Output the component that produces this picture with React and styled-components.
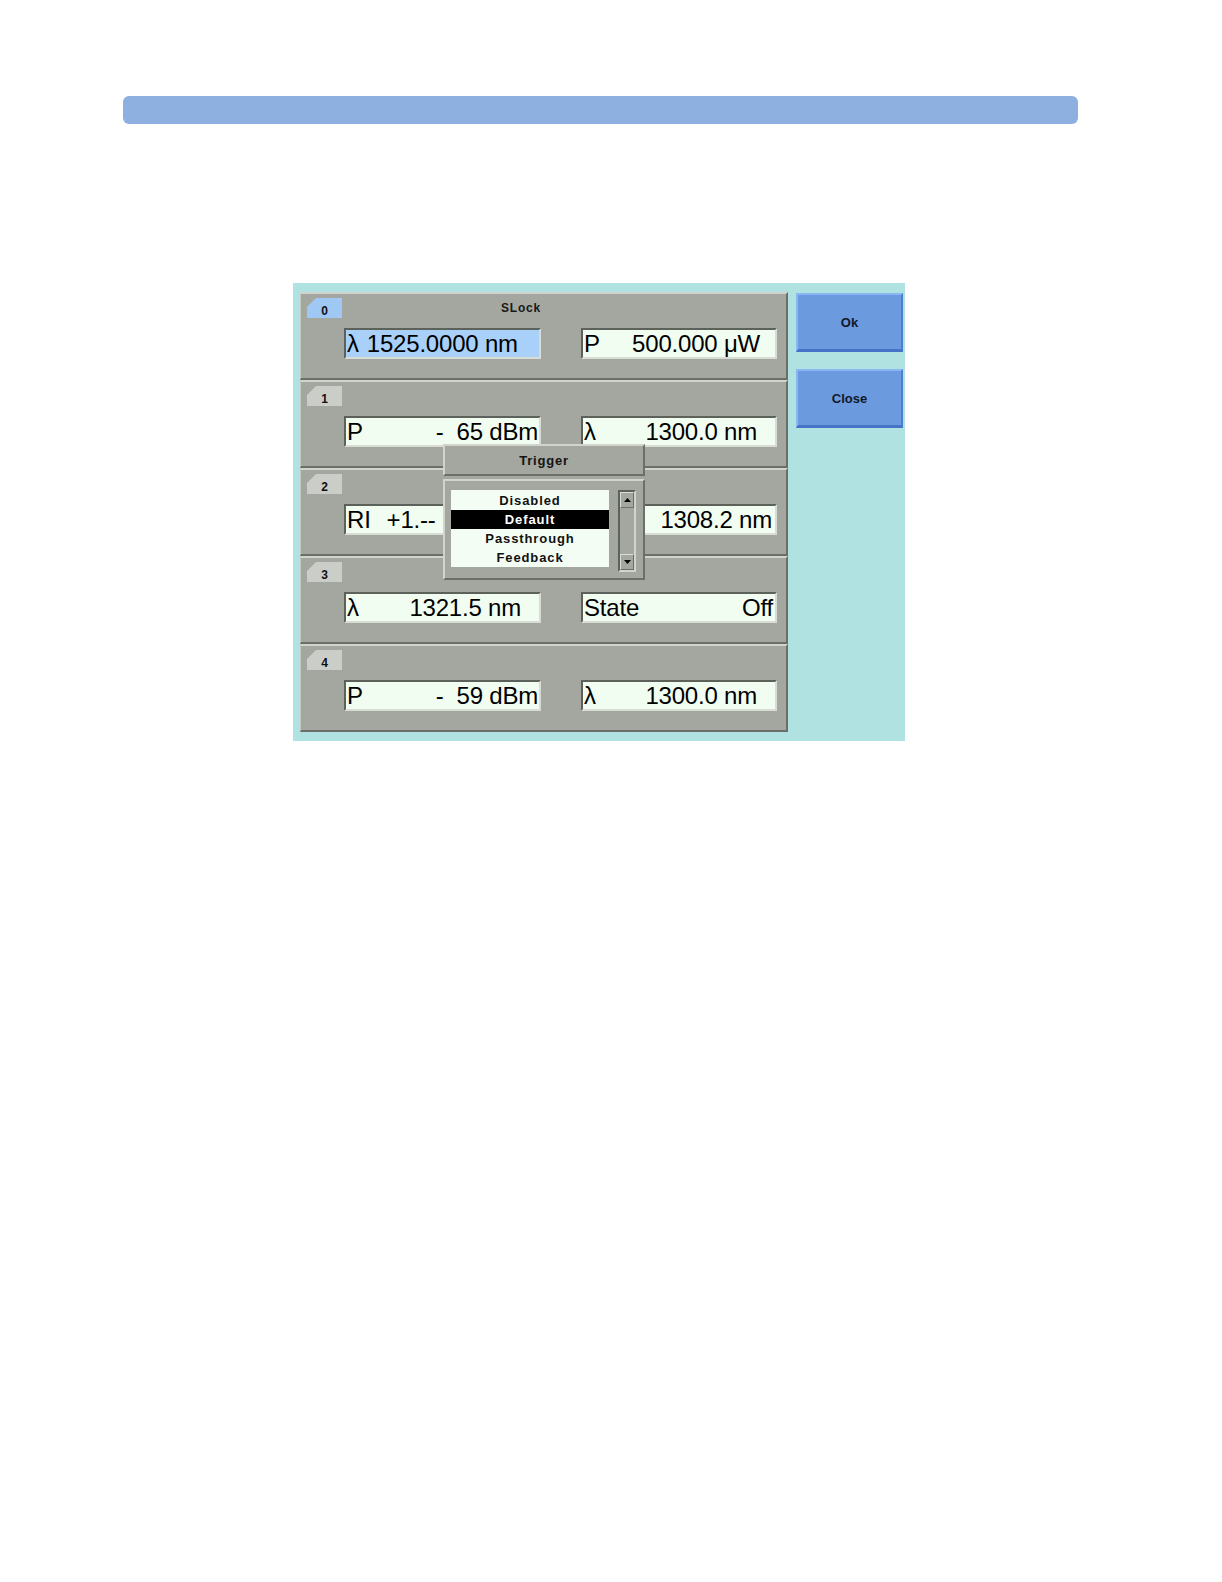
import React from "react";
import styled, { createGlobalStyle } from "styled-components";

const Global = createGlobalStyle`
  html, body { margin: 0; padding: 0; background: #ffffff; overflow: hidden; }
  body { font-family: "Liberation Sans", Arial, sans-serif; }
`;

const Page = styled.div`
  width: 100%;
  height: 1582px;
  padding-top: 96px;
  box-sizing: border-box;
  overflow: hidden;
`;

const TopBar = styled.div`
  margin-left: 123px;
  width: 955px;
  height: 28px;
  border-radius: 6px;
  background: #8db0e0;
`;

const Screen = styled.div`
  margin-top: 159px;
  margin-left: 293px;
  width: 612px;
  height: 458px;
  box-sizing: border-box;
  padding: 9px 0 0 7px;
  background: #b0e2e2;
  display: flex;
  gap: 8px;
  align-items: flex-start;
`;

const Panel = styled.div`
  position: relative;
  width: 488px;
  display: flex;
  flex-direction: column;
  background: #a4a7a0;
`;

const Row = styled.div`
  height: 88px;
  box-sizing: border-box;
  border-top: 2px solid #cfd3cb;
  border-bottom: 2px solid #6b6f69;
  border-left: 1px solid #c4c8c0;
  border-right: 2px solid #6b6f69;
  padding: 4px 0 0 6px;
  display: flex;
  flex-direction: column;
`;

const Header = styled.div`
  width: 234px;
  height: 20px;
  display: flex;
  align-items: center;
  justify-content: space-between;
`;

const Tab = styled.div`
  width: 35px;
  height: 20px;
  background: ${(p) => (p.$active ? "#a0c8f4" : "#cbcec8")};
  clip-path: polygon(9px 0, 100% 0, 100% 100%, 0 100%, 0 9px);
  font-size: 12px;
  font-weight: bold;
  color: #101010;
  display: flex;
  align-items: center;
  justify-content: center;
  padding-top: 6px;
  box-sizing: border-box;
`;

const Title = styled.div`
  font-size: 12px;
  font-weight: bold;
  letter-spacing: 0.8px;
  color: #181818;
  align-self: flex-start;
  margin-top: 3px;
`;

const Fields = styled.div`
  margin-top: 10px;
  margin-left: 37px;
  display: flex;
  gap: 40px;
`;

const Field = styled.div`
  width: ${(p) => p.$w}px;
  height: 31px;
  box-sizing: border-box;
  border-top: 2px solid #5c615a;
  border-left: 2px solid #5c615a;
  border-bottom: 2px solid #d8dcd4;
  border-right: 2px solid #d8dcd4;
  background: ${(p) => (p.$selected ? "#a8d0f8" : "#f2fdf2")};
  display: flex;
  align-items: center;
  padding-left: 1px;
  font-size: 24px;
  color: #000;
  white-space: pre;
  letter-spacing: -0.2px;
  overflow: hidden;
`;

const Label = styled.span`
  flex: none;
`;

const Value = styled.span`
  margin-left: ${(p) => (p.$left != null ? `${p.$left}px` : "auto")};
  padding-right: ${(p) => p.$pr || 0}px;
`;

const Side = styled.div`
  display: flex;
  flex-direction: column;
  gap: 17px;
  padding-top: 1px;
`;

const Button = styled.div`
  width: 107px;
  height: 59px;
  box-sizing: border-box;
  background: #6b9ade;
  border-top: 2px solid #8ab6f2;
  border-left: 2px solid #8ab6f2;
  border-bottom: 3px solid #4574c6;
  border-right: 2px solid #4f7ecc;
  display: flex;
  align-items: center;
  justify-content: center;
  font-size: 13px;
  font-weight: bold;
  color: #10182a;
`;

const Popup = styled.div`
  position: absolute;
  left: 143px;
  top: 152px;
  width: 202px;
  display: flex;
  flex-direction: column;
  gap: 3px;
`;

const PopHeader = styled.div`
  height: 32px;
  box-sizing: border-box;
  background: #a4a7a0;
  border-top: 2px solid #d0d4cc;
  border-left: 2px solid #d0d4cc;
  border-bottom: 2px solid #6b6f69;
  border-right: 2px solid #6b6f69;
  display: flex;
  align-items: center;
  justify-content: center;
  font-size: 13px;
  font-weight: bold;
  letter-spacing: 0.8px;
  color: #141414;
`;

const PopBody = styled.div`
  height: 101px;
  box-sizing: border-box;
  background: #a4a7a0;
  border-top: 2px solid #d0d4cc;
  border-left: 2px solid #d0d4cc;
  border-bottom: 2px solid #6b6f69;
  border-right: 2px solid #6b6f69;
  padding: 9px 0 0 6px;
  display: flex;
  gap: 9px;
  align-items: flex-start;
`;

const List = styled.div`
  width: 158px;
  height: 77px;
  background: #f4fdf4;
  display: flex;
  flex-direction: column;
  padding-top: 1px;
  box-sizing: border-box;
`;

const Item = styled.div`
  height: 19px;
  display: flex;
  align-items: center;
  justify-content: center;
  font-size: 13px;
  font-weight: bold;
  letter-spacing: 0.9px;
  background: ${(p) => (p.$sel ? "#000" : "transparent")};
  color: ${(p) => (p.$sel ? "#fff" : "#111")};
`;

const Scroll = styled.div`
  width: 18px;
  height: 82px;
  box-sizing: border-box;
  border-top: 2px solid #5c615a;
  border-left: 2px solid #5c615a;
  border-bottom: 2px solid #d0d4cc;
  border-right: 2px solid #d0d4cc;
  background: #a4a7a0;
  display: flex;
  flex-direction: column;
  justify-content: space-between;
`;

const ScrollBtn = styled.div`
  height: 16px;
  box-sizing: border-box;
  border-top: 1px solid #d8dcd4;
  border-left: 1px solid #d8dcd4;
  border-bottom: 1px solid #6b6f69;
  border-right: 1px solid #6b6f69;
  display: flex;
  align-items: center;
  justify-content: center;
`;

const Arrow = ({ down }) => (
  <svg width="7" height="4" viewBox="0 0 7 4">
    <polygon points={down ? "0,0 7,0 3.5,4" : "3.5,0 7,4 0,4"} fill="#000" />
  </svg>
);

const rows = [
  {
    tab: "0",
    active: true,
    title: "SLock",
    fields: [
      { label: "λ", value: "1525.0000 nm", left: 8, selected: true },
      { label: "P", value: "500.000 μW", pr: 15 },
    ],
  },
  {
    tab: "1",
    fields: [
      { label: "P", value: "-  65 dBm", pr: 1 },
      { label: "λ", value: "1300.0 nm", pr: 18 },
    ],
  },
  {
    tab: "2",
    fields: [
      { label: "RI", value: "+1.--", left: 16 },
      { label: "λ", value: "1308.2 nm", pr: 3 },
    ],
  },
  {
    tab: "3",
    fields: [
      { label: "λ", value: "1321.5 nm", pr: 18 },
      { label: "State", value: "Off", pr: 2 },
    ],
  },
  {
    tab: "4",
    fields: [
      { label: "P", value: "-  59 dBm", pr: 1 },
      { label: "λ", value: "1300.0 nm", pr: 18 },
    ],
  },
];

export default function App() {
  return (
    <Page>
      <Global />
      <TopBar />
      <Screen>
        <Panel>
          {rows.map((r) => (
            <Row key={r.tab}>
              <Header>
                <Tab $active={r.active}>{r.tab}</Tab>
                {r.title && <Title>{r.title}</Title>}
              </Header>
              <Fields>
                {r.fields.map((f, i) => (
                  <Field key={i} $w={i === 0 ? 197 : 196} $selected={f.selected}>
                    <Label>{f.label}</Label>
                    <Value $left={f.left} $pr={f.pr}>
                      {f.value}
                    </Value>
                  </Field>
                ))}
              </Fields>
            </Row>
          ))}
          <Popup>
            <PopHeader>Trigger</PopHeader>
            <PopBody>
              <List>
                <Item>Disabled</Item>
                <Item $sel>Default</Item>
                <Item>Passthrough</Item>
                <Item>Feedback</Item>
              </List>
              <Scroll>
                <ScrollBtn>
                  <Arrow />
                </ScrollBtn>
                <ScrollBtn>
                  <Arrow down />
                </ScrollBtn>
              </Scroll>
            </PopBody>
          </Popup>
        </Panel>
        <Side>
          <Button>Ok</Button>
          <Button>Close</Button>
        </Side>
      </Screen>
    </Page>
  );
}
